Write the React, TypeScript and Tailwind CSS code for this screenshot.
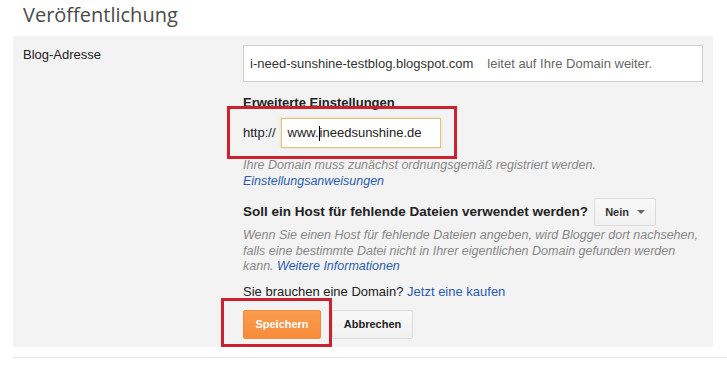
import React from "react";

export default function App() {
  return (
    <div className="relative w-[727px] h-[371px] bg-white overflow-hidden" style={{ fontFamily: '"Liberation Sans", Arial, sans-serif' }}>
      <div className="h-[36px] pl-[23px] pt-[1px] text-[20px] leading-[28px] text-[#4a4a4a]" style={{ fontFamily: '"Open Sans", sans-serif' }}>
        Veröffentlichung
      </div>
      <div className="ml-[13px] w-[700px] h-[311px] bg-[#f3f3f3] flex pt-[9px]">
        <div className="w-[230px] pl-[10px] pt-[2px] text-[13px] leading-[16px] text-[#222]">Blog-Adresse</div>
        <div className="w-[460px] flex flex-col">
          <div className="h-[37px] border border-[#cfcfcf] bg-white flex items-center pl-[6px] text-[13px] text-[#333]">
            <span>i-need-sunshine-testblog.blogspot.com</span>
            <span className="ml-[14px] text-[#666]">leitet auf Ihre Domain weiter.</span>
          </div>
          <div className="mt-[13px] text-[13px] leading-[16px] font-bold text-[#222]">Erweiterte Einstellungen</div>
          <div className="mt-[7px] flex items-center h-[30px]">
            <span className="text-[13px] text-[#222]">http://</span>
            <div className="ml-[5px] w-[160px] h-[30px] border border-[#e2c27c] bg-white flex items-center pl-[6px] text-[13px] text-[#222] shadow-[0_0_2px_rgba(230,190,110,0.6)]">
              <span>www.</span>
              <span className="inline-block w-[1px] h-[15px] bg-black"></span>
              <span>ineedsunshine.de</span>
            </div>
          </div>
          <div className="mt-[9px] text-[12.5px] leading-[16px] italic text-[#888]">Ihre Domain muss zunächst ordnungsgemäß registriert werden.</div>
          <div className="text-[12.5px] leading-[16px] italic text-[#2a5db0]">Einstellungsanweisungen</div>
          <div className="mt-[9px] flex items-center h-[28px]">
            <span className="text-[13.5px] font-bold text-[#222]">Soll ein Host für fehlende Dateien verwendet werden?</span>
            <div className="ml-[6px] w-[62px] h-[28px] border border-[#dcdcdc] rounded-[2px] bg-gradient-to-b from-[#f8f8f8] to-[#f1f1f1] flex items-center justify-center gap-[8px] text-[11px] font-bold text-[#333]">
              <span>Nein</span>
              <span className="w-0 h-0 border-l-[4px] border-r-[4px] border-t-[4px] border-l-transparent border-r-transparent border-t-[#666]"></span>
            </div>
          </div>
          <div className="mt-[2px] text-[12.5px] leading-[15.5px] italic text-[#888]">
            Wenn Sie einen Host für fehlende Dateien angeben, wird Blogger dort nachsehen,<br />
            falls eine bestimmte Datei nicht in Ihrer eigentlichen Domain gefunden werden<br />
            kann. <span className="text-[#2a5db0]">Weitere Informationen</span>
          </div>
          <div className="mt-[9px] text-[13px] leading-[16px] text-[#222]">
            Sie brauchen eine Domain? <span className="text-[#2a5db0]">Jetzt eine kaufen</span>
          </div>
          <div className="mt-[10px] flex gap-[11px]">
            <div className="w-[78px] h-[29px] rounded-[2px] border border-[#f08a3e] bg-gradient-to-b from-[#fb9c4e] to-[#f88b3a] flex items-center justify-center text-[11px] font-bold text-white">Speichern</div>
            <div className="w-[81px] h-[29px] rounded-[2px] border border-[#dcdcdc] bg-gradient-to-b from-[#f8f8f8] to-[#f1f1f1] flex items-center justify-center text-[11px] font-bold text-[#222]">Abbrechen</div>
          </div>
        </div>
      </div>
      <div className="ml-[13px] mt-[10px] h-[1px] bg-[#e5e5e5]"></div>
      <div className="absolute left-[227px] top-[106px] w-[230px] h-[53px] border-[3px] border-[#cc2230]"></div>
      <div className="absolute left-[221px] top-[298px] w-[111px] h-[49px] border-[3px] border-[#cc2230]"></div>
    </div>
  );
}
